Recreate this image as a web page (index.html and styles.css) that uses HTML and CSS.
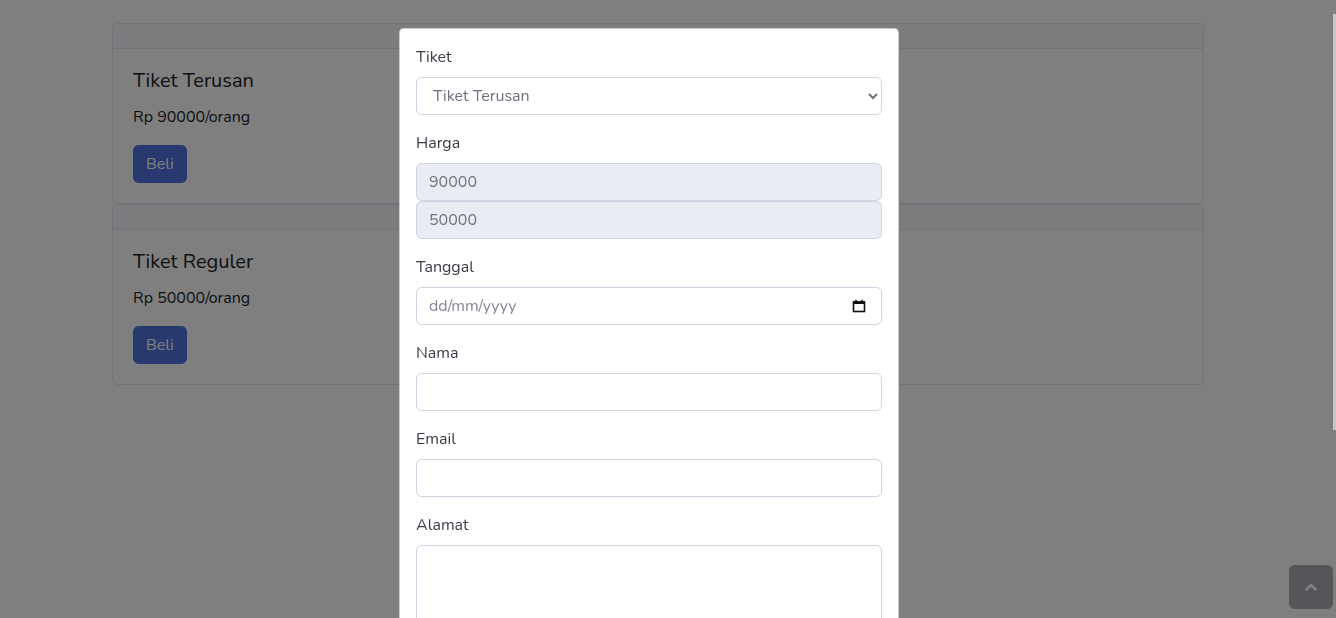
FILE: index.html
```html
<!DOCTYPE html>
<html lang="id">
<head>
<meta charset="utf-8">
<title>Tiket</title>
<link rel="stylesheet" href="styles.css">
</head>
<body>
<div class="page">
  <div class="cards">
    <div class="card">
      <div class="card-header"></div>
      <div class="card-body">
        <h5 class="card-title">Tiket Terusan</h5>
        <p class="card-text">Rp 90000/orang</p>
        <button class="btn" type="button">Beli</button>
      </div>
    </div>
    <div class="card">
      <div class="card-header"></div>
      <div class="card-body">
        <h5 class="card-title">Tiket Reguler</h5>
        <p class="card-text">Rp 50000/orang</p>
        <button class="btn" type="button">Beli</button>
      </div>
    </div>
  </div>
</div>

<a class="scroll-top" href="#">
  <svg width="12" height="8" viewBox="0 0 12 8"><path d="M1.5 6.5 L6 2 L10.5 6.5" fill="none" stroke="#fff" stroke-width="2.6" stroke-linecap="round" stroke-linejoin="round"/></svg>
</a>

<div class="backdrop"></div>

<div class="modal">
  <div class="modal-dialog">
    <div class="modal-content">
      <form class="modal-body">
        <div class="form-group">
          <label class="label">Tiket</label>
          <select class="form-control select">
            <option>Tiket Terusan</option>
            <option>Tiket Reguler</option>
          </select>
        </div>
        <div class="form-group">
          <label class="label">Harga</label>
          <input class="form-control" type="text" value="90000" disabled>
          <input class="form-control" type="text" value="50000" disabled>
        </div>
        <div class="form-group">
          <label class="label">Tanggal</label>
          <div class="date-field">
            <input class="form-control" type="text" placeholder="dd/mm/yyyy">
            <svg class="cal" width="14" height="14" viewBox="0 0 14 14"><rect x="1.5" y="3" width="11" height="9.5" fill="none" stroke="#111" stroke-width="1.6"/><rect x="1" y="2.4" width="12" height="2.6" fill="#111"/><rect x="3.2" y="0.8" width="1.6" height="2.4" fill="#111"/><rect x="9.2" y="0.8" width="1.6" height="2.4" fill="#111"/></svg>
          </div>
        </div>
        <div class="form-group">
          <label class="label">Nama</label>
          <input class="form-control" type="text">
        </div>
        <div class="form-group">
          <label class="label">Email</label>
          <input class="form-control" type="email">
        </div>
        <div class="form-group">
          <label class="label">Alamat</label>
          <textarea class="form-control textarea" rows="3"></textarea>
        </div>
      </form>
    </div>
  </div>
</div>

<div class="scrollbar"></div>
</body>
</html>
```

FILE: styles.css
```css
* { box-sizing: border-box; }
html, body { margin: 0; padding: 0; }
body {
  font-family: "Nunito", "Noto Sans", "Open Sans", sans-serif;
  font-size: 16px;
  line-height: 24px;
  color: #212529;
  background: #fff;
  overflow: hidden;
  height: 618px;
}
.page { padding-top: 23px; }
.cards {
  width: 1092px;
  margin-left: 112px;
  display: flex;
  flex-direction: column;
}
.card {
  border: 1px solid #e3e6f0;
  border-radius: 5.6px;
  background: #fff;
  overflow: hidden;
}
.card-header {
  height: 25px;
  background: #f8f9fc;
  border-bottom: 1px solid #e3e6f0;
}
.card-body { padding: 20px; }
.card-title {
  margin: 0 0 12px;
  font-size: 20px;
  line-height: 24px;
  font-weight: 400;
  color: #1b1d22;
}
.card-text { margin: 0 0 16px; color: #1b1d22; }
.btn {
  font-family: inherit;
  font-size: 16px;
  line-height: 24px;
  padding: 6px 12px;
  color: #fff;
  background: #4e73df;
  border: 1px solid #4e73df;
  border-radius: 5.6px;
  display: block;
}
.scroll-top {
  position: fixed;
  left: 1289px;
  top: 565px;
  width: 44px;
  height: 44px;
  border-radius: 5.6px;
  background: rgba(90, 92, 105, 0.5);
  display: flex;
  align-items: center;
  justify-content: center;
}
.backdrop {
  position: fixed;
  inset: 0;
  background: rgba(0, 0, 0, 0.5);
}
.modal {
  position: fixed;
  inset: 0;
}
.modal-dialog {
  width: 500px;
  margin: 28px 0 0 399px;
}
.modal-content {
  background: #fff;
  border: 1px solid rgba(0, 0, 0, 0.2);
  border-radius: 4.8px;
}
.modal-body {
  padding: 16px;
  margin: 0;
}
.form-group { margin-bottom: 16px; display: flex; flex-direction: column; }
.label {
  display: block;
  margin-bottom: 8px;
  color: #3a3b45;
}
.form-control {
  display: block;
  width: 100%;
  height: 38px;
  padding: 6px 12px;
  font-family: inherit;
  font-size: 16px;
  line-height: 24px;
  color: #6e707e;
  background: #fff;
  border: 1px solid #d1d3e2;
  border-radius: 5.6px;
  outline: none;
  margin: 0;
}
.form-control:disabled { background: #eaecf4; color: #6e707e; opacity: 1; }
.form-control::placeholder { color: #858796; }
.select { padding-left: 12px; }
.textarea { height: 86px; resize: none; }
.date-field { position: relative; }
.cal {
  position: absolute;
  left: 436px;
  top: 12px;
}
.scrollbar {
  position: fixed;
  left: 1333px;
  top: 14px;
  width: 3px;
  height: 416px;
  background: #c8c8c8;
}
```
